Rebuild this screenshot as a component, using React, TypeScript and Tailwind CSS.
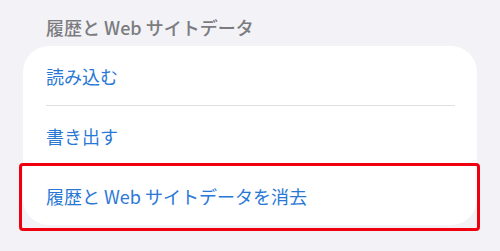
export default function App() {
  const rows = ['読み込む', '書き出す']

  return (
    <div
      className="min-h-[251px] w-full bg-[#f2f2f7] px-[23px] pt-[16px]"
      style={{ fontFamily: '"Noto Sans CJK JP", "Noto Sans", sans-serif' }}
    >
      <h2 className="pl-[23px] text-[18px] leading-[22px] font-medium text-[#7c7c80]">
        履歴と Web サイトデータ
      </h2>
      <div className="mt-[8px] rounded-[26px] bg-white">
        {rows.map((label) => (
          <div key={label} className="pl-[23px] pr-[22px]">
            <div className="flex h-[60px] items-center border-b border-[#e0e0e3] pt-[1px] text-[18px] text-[#2a78d6]">
              {label}
            </div>
          </div>
        ))}
        <div className="relative flex h-[59px] items-center pl-[23px] pt-[1px] text-[18px] text-[#2a78d6]">
          履歴と Web サイトデータを消去
          <div className="pointer-events-none absolute top-[-3px] right-[-3px] bottom-[-6px] left-[-4px] rounded-[4px] border-[3px] border-[#f0000e]" />
        </div>
      </div>
    </div>
  )
}
